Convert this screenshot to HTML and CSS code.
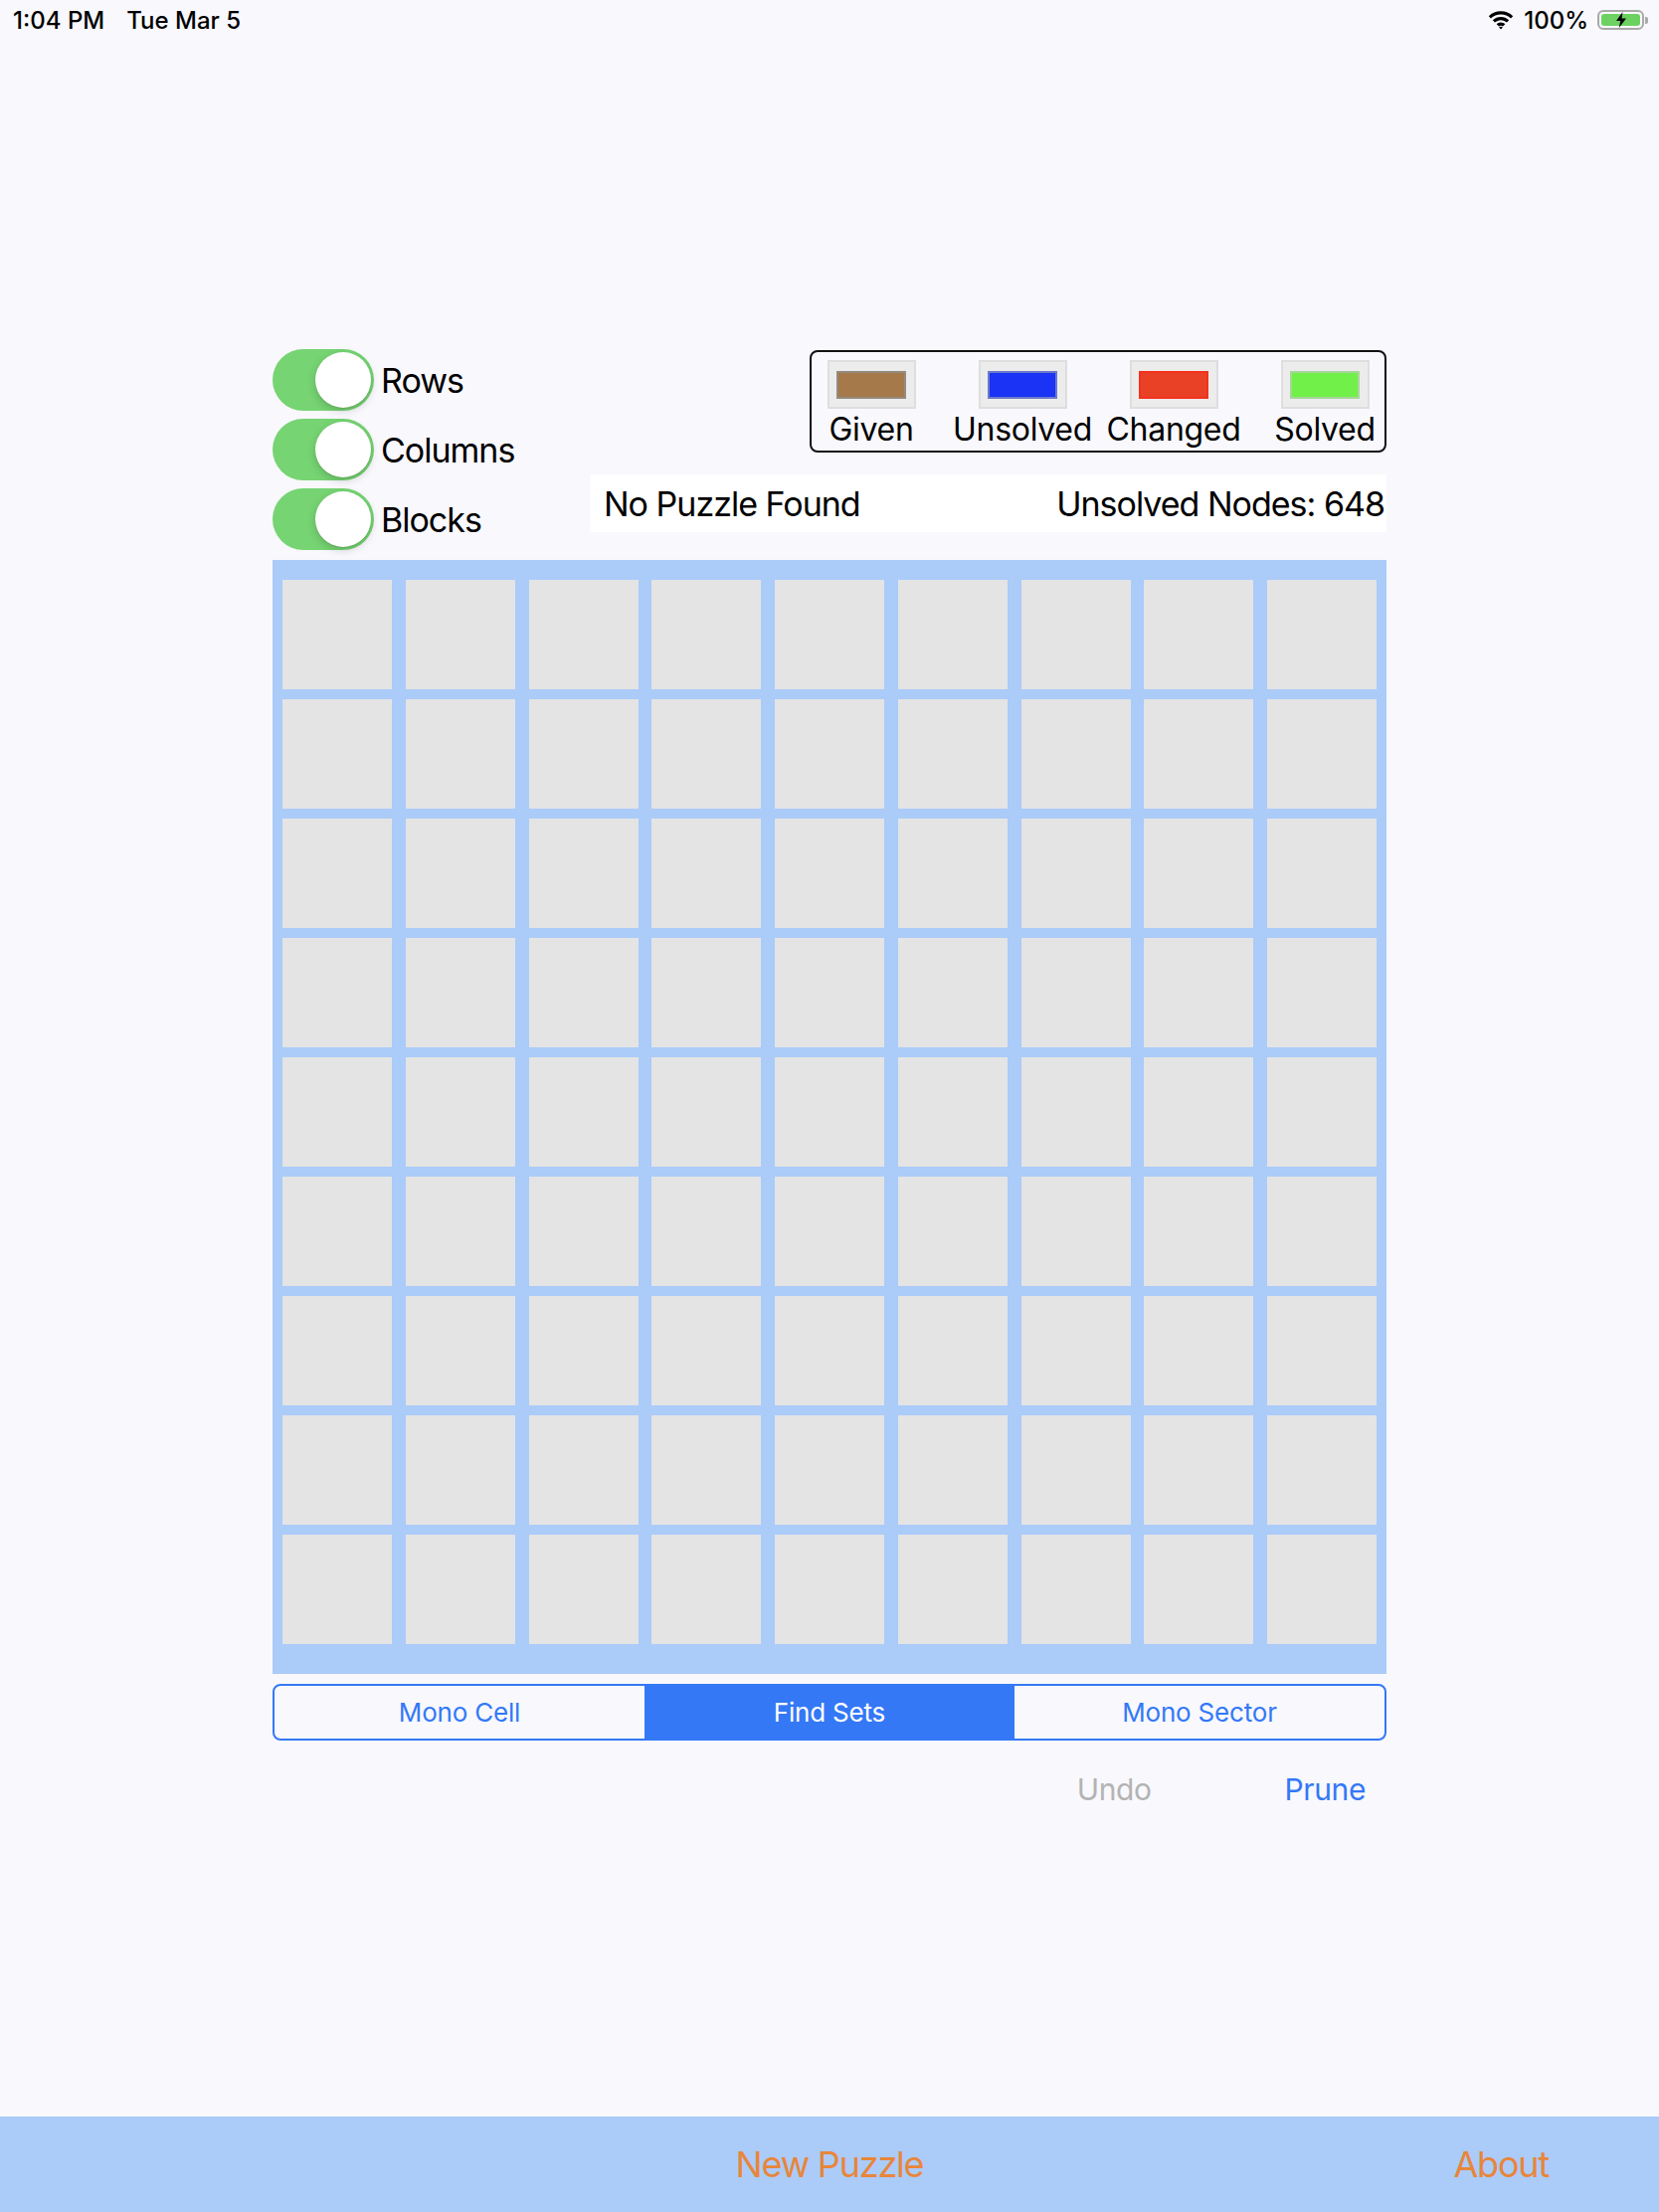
FILE: index.html
```html
<!DOCTYPE html>
<html lang="en">
  <head>
    <meta charset="UTF-8" />
    <meta name="viewport" content="width=device-width, initial-scale=1.0" />
    <title>Sudoku Solver</title>
    <link rel="stylesheet" href="styles.css">
  </head>
  <body>
    <header class="status-bar">
      <div class="status-left">
        <span>1:04 PM</span>
        <span>Tue Mar 5</span>
      </div>
      <div class="status-right">
        <svg class="wifi" width="28" height="20" viewBox="0 0 28 20">
          <path d="M14 4.5c3.9 0 7.4 1.5 10 4l2.2-2.3C23 3 18.7 1.2 14 1.2S5 3 1.8 6.2L4 8.5c2.6-2.5 6.1-4 10-4z" fill="#000" />
          <path d="M14 10.2c2.3 0 4.4.9 6 2.4l2.2-2.3C20 8.2 17.2 7 14 7s-6 1.2-8.2 3.3L8 12.6c1.6-1.5 3.7-2.4 6-2.4z" fill="#000" />
          <path d="M14 15.8c.8 0 1.5.3 2 .8l2.3-2.3c-1.1-1.1-2.7-1.8-4.3-1.8s-3.2.7-4.3 1.8l2.3 2.3c.5-.5 1.2-.8 2-.8zM14 19.4l-1.9-1.9c.5-.5 1.2-.7 1.9-.7s1.4.2 1.9.7z" fill="#000" />
        </svg>
        <span>100%</span>
        <div class="battery">
          <div class="battery-body">
            <div class="battery-fill">
              <svg width="12" height="16" viewBox="0 0 12 16">
                <path d="M7.5 0L1 9h4.2L3.8 16 11 6.5H6.6z" fill="#000" />
              </svg>
            </div>
          </div>
          <div class="battery-nub"></div>
        </div>
      </div>
    </header>

    <main class="board">
      <div class="top">
        <div class="toggles">
          <div class="toggle-row"><span class="switch"><span class="knob"></span></span>Rows</div>
          <div class="toggle-row"><span class="switch"><span class="knob"></span></span>Columns</div>
          <div class="toggle-row"><span class="switch"><span class="knob"></span></span>Blocks</div>
        </div>

        <div class="info">
          <div class="legend">
            <div class="legend-item">
              <span class="swatch"><span class="swatch-color given"></span></span>
              <span>Given</span>
            </div>
            <div class="legend-item">
              <span class="swatch"><span class="swatch-color unsolved"></span></span>
              <span>Unsolved</span>
            </div>
            <div class="legend-item">
              <span class="swatch"><span class="swatch-color changed"></span></span>
              <span>Changed</span>
            </div>
            <div class="legend-item">
              <span class="swatch"><span class="swatch-color solved"></span></span>
              <span>Solved</span>
            </div>
          </div>
          <div class="status-strip">
            <span>No Puzzle Found</span>
            <span>Unsolved Nodes: 648</span>
          </div>
        </div>
      </div>

      <!-- 9x9 board -->
      <div class="grid">
        <div class="cell"></div><div class="cell"></div><div class="cell"></div><div class="cell"></div><div class="cell"></div><div class="cell"></div><div class="cell"></div><div class="cell"></div><div class="cell"></div>
        <div class="cell"></div><div class="cell"></div><div class="cell"></div><div class="cell"></div><div class="cell"></div><div class="cell"></div><div class="cell"></div><div class="cell"></div><div class="cell"></div>
        <div class="cell"></div><div class="cell"></div><div class="cell"></div><div class="cell"></div><div class="cell"></div><div class="cell"></div><div class="cell"></div><div class="cell"></div><div class="cell"></div>
        <div class="cell"></div><div class="cell"></div><div class="cell"></div><div class="cell"></div><div class="cell"></div><div class="cell"></div><div class="cell"></div><div class="cell"></div><div class="cell"></div>
        <div class="cell"></div><div class="cell"></div><div class="cell"></div><div class="cell"></div><div class="cell"></div><div class="cell"></div><div class="cell"></div><div class="cell"></div><div class="cell"></div>
        <div class="cell"></div><div class="cell"></div><div class="cell"></div><div class="cell"></div><div class="cell"></div><div class="cell"></div><div class="cell"></div><div class="cell"></div><div class="cell"></div>
        <div class="cell"></div><div class="cell"></div><div class="cell"></div><div class="cell"></div><div class="cell"></div><div class="cell"></div><div class="cell"></div><div class="cell"></div><div class="cell"></div>
        <div class="cell"></div><div class="cell"></div><div class="cell"></div><div class="cell"></div><div class="cell"></div><div class="cell"></div><div class="cell"></div><div class="cell"></div><div class="cell"></div>
        <div class="cell"></div><div class="cell"></div><div class="cell"></div><div class="cell"></div><div class="cell"></div><div class="cell"></div><div class="cell"></div><div class="cell"></div><div class="cell"></div>
      </div>

      <div class="segmented">
        <div class="segment">Mono Cell</div>
        <div class="segment selected">Find Sets</div>
        <div class="segment">Mono Sector</div>
      </div>

      <div class="actions">
        <span class="action disabled">Undo</span>
        <span class="action">Prune</span>
      </div>
    </main>

    <footer class="toolbar">
      <span></span>
      <span class="toolbar-item">New Puzzle</span>
      <span class="toolbar-item about">About</span>
    </footer>
  </body>
</html>
```

FILE: styles.css
```css
body,
html {
  margin: 0;
  padding: 0;
}

body {
  min-height: 100vh;
  display: flex;
  flex-direction: column;
  background: #f8f8fd;
  color: #000;
  font-family: Inter, "Noto Sans", sans-serif;
}

/* Status bar */
.status-bar {
  height: 40px;
  padding: 0 11px 0 13px;
  display: flex;
  justify-content: space-between;
  align-items: center;
  font-size: 24px;
  font-weight: 500;
}

.status-left {
  display: flex;
  gap: 22px;
}

.status-right {
  display: flex;
  align-items: center;
  gap: 9px;
}

.battery {
  display: flex;
  align-items: center;
}

.battery-body {
  width: 47px;
  height: 20px;
  box-sizing: border-box;
  border: 2px solid #a9a9a9;
  border-radius: 6px;
  padding: 2px;
}

.battery-fill {
  height: 100%;
  background: #6cd160;
  border-radius: 3px;
  display: flex;
  justify-content: center;
  align-items: center;
}

.battery-nub {
  width: 3px;
  height: 7px;
  background: #a9a9a9;
  border-radius: 0 2px 2px 0;
  margin-left: 1px;
}

/* Board area */
.board {
  width: 1120px;
  margin: 0 auto;
  padding-top: 311px;
}

.top {
  display: flex;
  justify-content: space-between;
}

.toggles {
  display: flex;
  flex-direction: column;
  gap: 8px;
}

.toggle-row {
  display: flex;
  align-items: center;
  gap: 7px;
  font-size: 34px;
  letter-spacing: -1px;
}

.switch {
  width: 102px;
  height: 62px;
  border-radius: 31px;
  background: #76d472;
  display: flex;
  justify-content: flex-end;
  align-items: center;
  padding: 0 3px;
  box-sizing: border-box;
}

.knob {
  width: 56px;
  height: 56px;
  border-radius: 50%;
  background: #fff;
  box-shadow: 0 3px 8px rgba(0, 0, 0, 0.18), 0 1px 1px rgba(0, 0, 0, 0.08);
}

.info {
  width: 801px;
  margin-top: 1px;
  display: flex;
  flex-direction: column;
  align-items: flex-end;
}

.legend {
  width: 580px;
  height: 103px;
  box-sizing: border-box;
  border: 2px solid #111;
  border-radius: 8px;
  padding-top: 8px;
  display: grid;
  grid-template-columns: repeat(4, 152px);
  justify-content: center;
}

.legend-item {
  display: flex;
  flex-direction: column;
  align-items: center;
  font-size: 32px;
  line-height: 42px;
  letter-spacing: -0.3px;
  white-space: nowrap;
}

.swatch {
  width: 89px;
  height: 49px;
  box-sizing: border-box;
  background: #ececec;
  border: 2px solid #dedede;
  display: flex;
  justify-content: center;
  align-items: center;
}

.swatch-color {
  width: 70px;
  height: 28px;
  box-sizing: border-box;
  border: 2px solid #999;
}

.swatch-color.given {
  background: #a57949;
  border-color: #958a7e;
}

.swatch-color.unsolved {
  background: #1a33f5;
  border-color: #6c79c9;
}

.swatch-color.changed {
  background: #e94126;
  border-color: #f3321c;
}

.swatch-color.solved {
  background: #72f04a;
  border-color: #a8d59c;
}

.status-strip {
  width: 801px;
  height: 58px;
  margin-top: 22px;
  box-sizing: border-box;
  padding: 0 2px 0 14px;
  background: #fff;
  display: flex;
  justify-content: space-between;
  align-items: center;
  font-size: 34px;
  letter-spacing: -1px;
}

/* Grid */
.grid {
  margin-top: 10px;
  padding: 20px 10px 30px;
  background: #abcbf9;
  display: grid;
  grid-template-columns: repeat(9, 110px);
  grid-auto-rows: 110px;
  column-gap: 13.75px;
  row-gap: 10px;
}

.cell {
  background: #e4e4e4;
}

/* Segmented control */
.segmented {
  margin-top: 10px;
  height: 57px;
  box-sizing: border-box;
  border: 2px solid #3478f6;
  border-radius: 8px;
  overflow: hidden;
  display: grid;
  grid-template-columns: repeat(3, 1fr);
}

.segment {
  display: flex;
  justify-content: center;
  align-items: center;
  color: #3478f6;
  font-size: 26px;
  letter-spacing: -0.2px;
}

.segment.selected {
  background: #3478f6;
  color: #fff;
}

.actions {
  margin-top: 31px;
  padding-right: 21px;
  display: flex;
  justify-content: flex-end;
  gap: 134px;
  font-size: 30px;
  line-height: 36px;
  letter-spacing: -0.4px;
}

.action {
  color: #3478f6;
}

.action.disabled {
  color: #b3b3b3;
}

/* Bottom toolbar */
.toolbar {
  margin-top: auto;
  height: 96px;
  background: #abcbf9;
  display: grid;
  grid-template-columns: 1fr auto 1fr;
  align-items: center;
}

.toolbar-item {
  color: #e8863a;
  font-size: 36px;
  letter-spacing: -1.2px;
}

.toolbar-item.about {
  justify-self: end;
  margin-right: 111px;
}
```
